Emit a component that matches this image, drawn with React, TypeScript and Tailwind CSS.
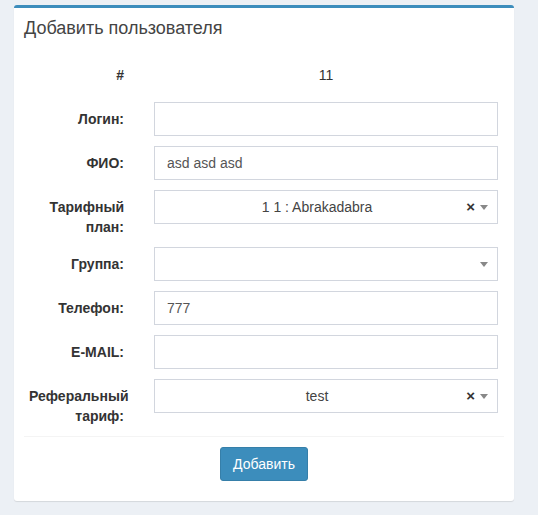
const FONT = "font-['Liberation_Sans',Arial,sans-serif]";

type Row =
  | { kind: "static"; label: string; value: string }
  | { kind: "input"; label: string; value?: string }
  | { kind: "select"; label: string; value?: string; clearable?: boolean };

const rows: Row[] = [
  { kind: "static", label: "#", value: "11" },
  { kind: "input", label: "Логин:" },
  { kind: "input", label: "ФИО:", value: "asd asd asd" },
  { kind: "select", label: "Тарифный план:", value: "1 1 : Abrakadabra", clearable: true },
  { kind: "select", label: "Группа:" },
  { kind: "input", label: "Телефон:", value: "777" },
  { kind: "input", label: "E-MAIL:" },
  { kind: "select", label: "Реферальный тариф:", value: "test", clearable: true },
];

const Field = ({ row }: { row: Row }) => {
  if (row.kind === "static") {
    return <div className="h-[34px] pt-[7px] leading-5 text-center text-[#333]">{row.value}</div>;
  }
  if (row.kind === "input") {
    return (
      <div className="h-[34px] border border-[#d2d6de] bg-white px-3 leading-[32px] text-[#555]">
        {row.value ?? ""}
      </div>
    );
  }
  // select2-like box
  return (
    <div className="relative h-[34px] border border-[#d2d6de] bg-white leading-[32px] text-[#444]">
      <div className="pl-2 pr-[26px] text-center">{row.value ?? "\u00a0"}</div>
      {row.clearable && (
        <span className="absolute right-[22px] top-0 text-[15px] font-bold text-[#333]">×</span>
      )}
      <span className="absolute right-[9px] top-[14px] h-0 w-0 border-x-[4px] border-t-[5px] border-x-transparent border-t-[#888]" />
    </div>
  );
};

export default function App() {
  return (
    <div className={`min-h-[515px] bg-[#ecf0f5] pl-[14px] pr-[24px] pt-[5px] ${FONT} text-sm`}>
      <div className="w-[500px] rounded-[3px] border-t-[3px] border-[#3c8dbc] bg-white shadow-[0_1px_1px_rgba(0,0,0,0.1)]">
        <div className="p-[10px]">
          <h3 className="text-[18px] leading-5 text-[#444]">Добавить пользователя</h3>
        </div>
        <div className="p-[10px]">
          {rows.map((row) => (
            <div key={row.label} className="mb-[10px] flex">
              <label className="ml-[5px] w-[95px] shrink-0 pt-[7px] text-right font-bold leading-5 text-[#333]">
                {row.label}
              </label>
              <div className="ml-[30px] w-[344px]">
                <Field row={row} />
              </div>
            </div>
          ))}
        </div>
        <div className="mx-[10px] -mt-[10px] border-t border-[#f4f4f4] pb-[20px] pt-[10px] text-center">
          <button className="h-[34px] rounded-[3px] border border-[#367fa9] bg-[#3c8dbc] px-3 text-sm text-white">
            Добавить
          </button>
        </div>
      </div>
    </div>
  );
}
